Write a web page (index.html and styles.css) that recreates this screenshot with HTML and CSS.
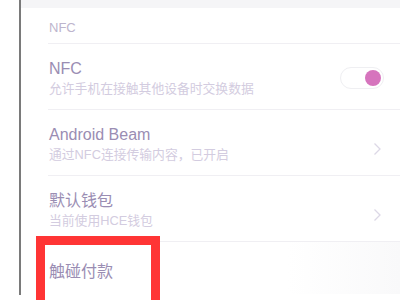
FILE: index.html
```html
<!DOCTYPE html>
<html>
<head>
<meta charset="utf-8">
<link rel="stylesheet" href="styles.css">
</head>
<body>
<div class="page">
  <div class="gutter"></div>
  <div class="content">
    <div class="topband"></div>
    <div class="section-header">NFC</div>
    <div class="row">
      <div class="text">
        <div class="title">NFC</div>
        <div class="sub">允许手机在接触其他设备时交换数据</div>
      </div>
      <div class="toggle"><span class="knob"></span></div>
    </div>
    <div class="row">
      <div class="text">
        <div class="title">Android Beam</div>
        <div class="sub">通过NFC连接传输内容，已开启</div>
      </div>
      <svg class="chev" width="9" height="14" viewBox="0 0 9 14"><path d="M1.5 1.5 L7 7 L1.5 12.5" fill="none" stroke="#dcd8e6" stroke-width="1.3"/></svg>
    </div>
    <div class="row">
      <div class="text">
        <div class="title">默认钱包</div>
        <div class="sub">当前使用HCE钱包</div>
      </div>
      <svg class="chev" width="9" height="14" viewBox="0 0 9 14"><path d="M1.5 1.5 L7 7 L1.5 12.5" fill="none" stroke="#dcd8e6" stroke-width="1.3"/></svg>
    </div>
    <div class="row last">
      <div class="text">
        <div class="title">触碰付款</div>
      </div>
    </div>
  </div>
  <div class="highlight"></div>
</div>
</body>
</html>
```

FILE: styles.css
```css
html, body {
  margin: 0;
  padding: 0;
  background: #ffffff;
}
.page {
  position: relative;
  width: 400px;
  height: 300px;
  overflow: hidden;
  display: flex;
  font-family: "Liberation Sans", "Noto Sans CJK SC", sans-serif;
}
.gutter {
  width: 19px;
  flex: none;
  background: #ffffff;
}
.content {
  flex: 1;
  border-left: 2px solid #7a7a7a;
  height: 295px;
}
.topband {
  height: 8px;
  background: #f5f5f7;
}
.section-header {
  font-size: 13px;
  line-height: 16px;
  color: #bdb5cd;
  padding: 12px 0 7px 28px;
}
.row {
  margin-left: 27px;
  border-top: 1px solid #f0eff3;
  display: flex;
  align-items: center;
  padding: 15px 18px 12px 1px;
}
.text {
  flex: 1;
}
.title {
  font-size: 16px;
  line-height: 20px;
  color: #9a8db3;
}
.sub {
  margin-top: 2px;
  font-size: 12.8px;
  line-height: 16px;
  color: #d3cce0;
  white-space: nowrap;
}
.toggle {
  width: 38px;
  height: 20px;
  border: 1px solid #efeff2;
  border-radius: 11px;
  display: flex;
  align-items: center;
  justify-content: flex-end;
  padding: 0 2px;
  margin-right: -2px;
}
.knob {
  width: 16px;
  height: 16px;
  border-radius: 50%;
  background: #d674bd;
}
.chev {
  display: block;
  margin-top: 10px;
}
.row.last {
  padding-top: 20px;
  background: linear-gradient(to right, #ffffff 0, #ffffff 240px, #f9f9fa 100%);
}
.highlight {
  position: absolute;
  left: 36px;
  top: 236px;
  width: 106px;
  height: 60px;
  border: 9px solid #ff3535;
}
```
